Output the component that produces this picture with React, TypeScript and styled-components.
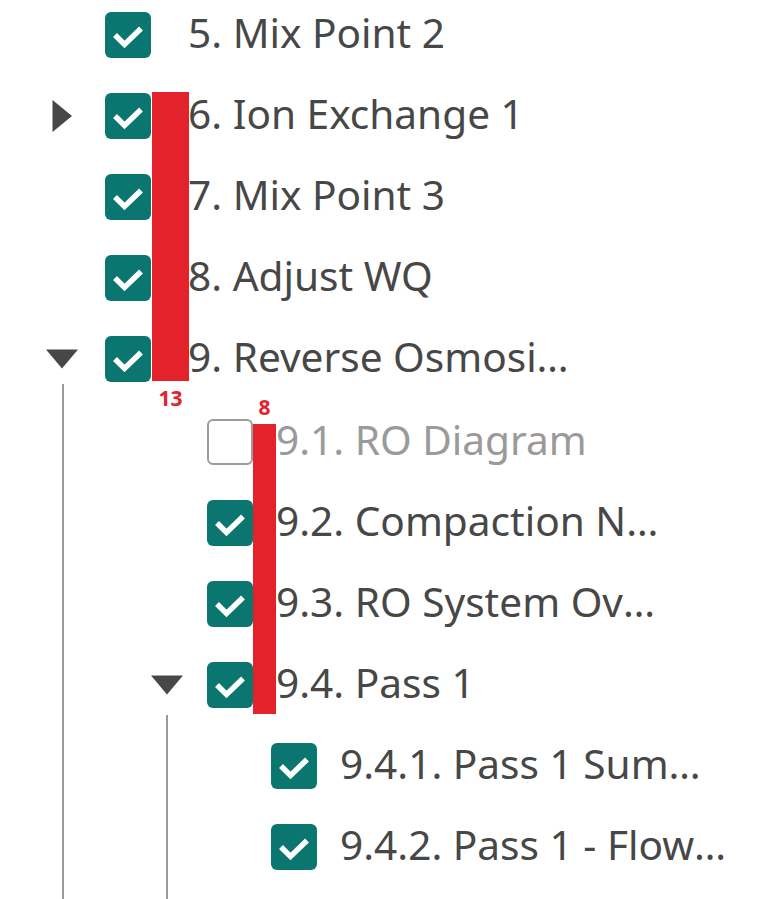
import React from 'react';
import styled, { createGlobalStyle } from 'styled-components';

const GlobalStyle = createGlobalStyle`
  html, body { margin: 0; padding: 0; background: #ffffff; }
  body { font-family: "Noto Sans", "Open Sans", sans-serif; overflow: hidden; }
`;

type TreeNode = {
  label: string;
  checked: boolean;
  expandable?: boolean;
  expanded?: boolean;
  children?: TreeNode[];
};

const data: TreeNode[] = [
  { label: '5. Mix Point 2', checked: true },
  { label: '6. Ion Exchange 1', checked: true, expandable: true },
  { label: '7. Mix Point 3', checked: true },
  { label: '8. Adjust WQ', checked: true },
  {
    label: '9. Reverse Osmosis System',
    checked: true,
    expandable: true,
    expanded: true,
    children: [
      { label: '9.1. RO Diagram', checked: false },
      { label: '9.2. Compaction Notes', checked: true },
      { label: '9.3. RO System Overview', checked: true },
      {
        label: '9.4. Pass 1',
        checked: true,
        expandable: true,
        expanded: true,
        children: [
          { label: '9.4.1. Pass 1 Summary', checked: true },
          { label: '9.4.2. Pass 1 - Flow Diagram', checked: true },
        ],
      },
    ],
  },
];

type LevelSpec = {
  pad: number;
  toggleSlot: boolean;
  toggleGap: number;
  labelGap: number;
  line: number;
  lineTop: number;
  groupTop: number;
};

const levels: LevelSpec[] = [
  { pad: 42, toggleSlot: true, toggleGap: 23, labelGap: 37, line: 62, lineTop: -17, groupTop: 2 },
  { pad: 147, toggleSlot: true, toggleGap: 20, labelGap: 23, line: 166, lineTop: -10, groupTop: 0 },
  { pad: 271, toggleSlot: false, toggleGap: 0, labelGap: 23, line: 0, lineTop: 0, groupTop: 0 },
];

const Canvas = styled.div`
  position: relative;
  width: 778px;
  height: 899px;
  overflow: hidden;
`;

const Tree = styled.div`
  display: flex;
  flex-direction: column;
  margin-top: -6px;
`;

const Row = styled.div<{ $pad: number }>`
  display: flex;
  align-items: center;
  height: 81px;
  padding-left: ${(p) => p.$pad}px;
`;

const ToggleSlot = styled.span<{ $gap: number }>`
  display: flex;
  align-items: center;
  justify-content: center;
  width: 40px;
  height: 40px;
  margin-right: ${(p) => p.$gap}px;
  color: #474747;
`;

const Box = styled.span<{ $checked: boolean }>`
  display: flex;
  align-items: center;
  justify-content: center;
  flex: none;
  box-sizing: border-box;
  width: 46px;
  height: 46px;
  border-radius: 6px;
  background: ${(p) => (p.$checked ? '#0a766f' : '#ffffff')};
  border: ${(p) => (p.$checked ? 'none' : '2.5px solid #9c9c9c')};
`;

const Label = styled.span<{ $gap: number; $muted: boolean }>`
  margin-left: ${(p) => p.$gap}px;
  margin-bottom: 3px;
  max-width: 390px;
  font-size: 40.6px;
  line-height: 58px;
  color: ${(p) => (p.$muted ? '#9a9a9a' : '#474747')};
  white-space: nowrap;
  overflow: hidden;
  text-overflow: ellipsis;
`;

const Group = styled.div<{ $line: number; $lineTop: number; $top: number }>`
  position: relative;
  display: flex;
  flex-direction: column;
  margin-top: ${(p) => p.$top}px;
  &::before {
    content: '';
    position: absolute;
    left: ${(p) => p.$line}px;
    top: ${(p) => p.$lineTop}px;
    bottom: -40px;
    width: 2px;
    background: #9a9a9a;
  }
`;

const Measure = styled.div<{ $x: number; $y: number; $w: number; $below: boolean }>`
  position: absolute;
  left: ${(p) => p.$x}px;
  top: ${(p) => p.$y}px;
  width: ${(p) => p.$w}px;
  display: flex;
  flex-direction: ${(p) => (p.$below ? 'column' : 'column-reverse')};
  align-items: center;
`;

const MeasureBar = styled.div<{ $h: number }>`
  width: 100%;
  height: ${(p) => p.$h}px;
  background: #e3222b;
`;

const MeasureText = styled.span<{ $gap: number }>`
  margin: ${(p) => p.$gap}px 0;
  font-size: 21px;
  line-height: 21px;
  font-weight: 700;
  color: #e3222b;
`;

const Caret = ({ open }: { open: boolean }) =>
  open ? (
    <svg width="32" height="20" viewBox="0 0 32 20" aria-hidden>
      <polygon points="0,0.5 32,0.5 16,19.5" fill="currentColor" />
    </svg>
  ) : (
    <svg width="20" height="32" viewBox="0 0 20 32" aria-hidden>
      <polygon points="0.5,0 20,16 0.5,32" fill="currentColor" />
    </svg>
  );

const Check = () => (
  <svg width="46" height="46" viewBox="0 0 46 46" aria-hidden>
    <polyline
      points="10,23 19.5,32.5 36,16.5"
      fill="none"
      stroke="#ffffff"
      strokeWidth="5.5"
      strokeLinecap="butt"
      strokeLinejoin="miter"
    />
  </svg>
);

const Node = ({ node, level }: { node: TreeNode; level: number }) => {
  const spec = levels[level];
  return (
    <>
      <Row $pad={spec.pad}>
        {spec.toggleSlot && (
          <ToggleSlot $gap={spec.toggleGap}>
            {node.expandable && <Caret open={!!node.expanded} />}
          </ToggleSlot>
        )}
        <Box $checked={node.checked}>{node.checked && <Check />}</Box>
        <Label $gap={spec.labelGap} $muted={!node.checked}>
          {node.label}
        </Label>
      </Row>
      {node.expanded && node.children && (
        <Group $line={spec.line} $lineTop={spec.lineTop} $top={spec.groupTop}>
          {node.children.map((c) => (
            <Node key={c.label} node={c} level={level + 1} />
          ))}
        </Group>
      )}
    </>
  );
};

export default function App() {
  return (
    <Canvas>
      <GlobalStyle />
      <Tree>
        {data.map((n) => (
          <Node key={n.label} node={n} level={0} />
        ))}
      </Tree>
      <Measure $x={152} $y={92} $w={37} $below>
        <MeasureBar $h={289} />
        <MeasureText $gap={7}>13</MeasureText>
      </Measure>
      <Measure $x={253} $y={391} $w={23} $below={false}>
        <MeasureBar $h={290} />
        <MeasureText $gap={6}>8</MeasureText>
      </Measure>
    </Canvas>
  );
}
